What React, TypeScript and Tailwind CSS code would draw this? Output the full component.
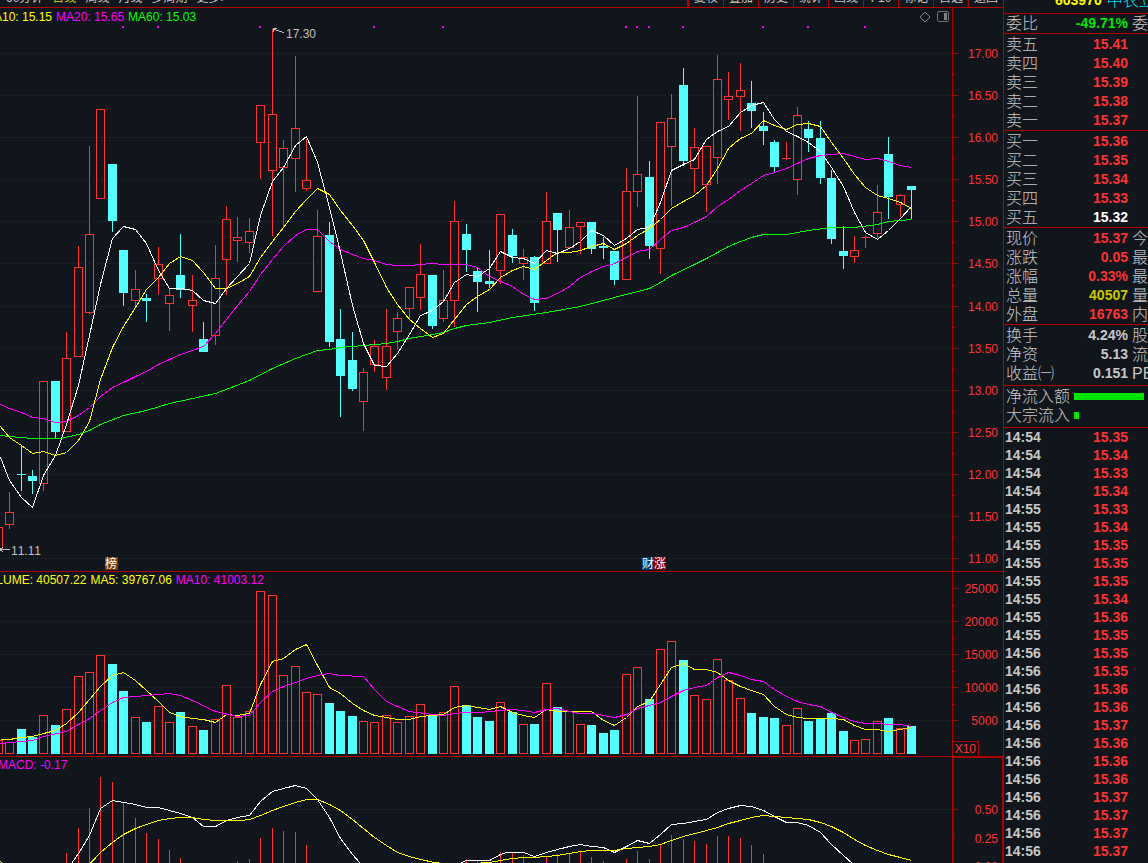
import { clsx } from 'clsx';

type Point = [number, number];
// x, rising, high, body top, body bottom, low, volume top
type Candle = [number, 0 | 1, number, number, number, number, number];

const RED = '#ff3232';
const CYAN = '#54ffff';
const LINE = '#b00000';
const GRID = '#8c1416';
const VOLUME_BASE = 754;

const candles: Candle[] = [
  [-2, 1, 527, 527, 549, 549, 740],
  [9, 1, 492, 512, 524, 528, 742],
  [21, 0, 445, 474, 474, 490, 729],
  [32, 0, 470, 476, 480, 493, 737],
  [43, 1, 381, 381, 483, 490, 715],
  [55, 0, 381, 381, 431, 437, 725],
  [66, 1, 332, 358, 431, 431, 709],
  [78, 1, 246, 267, 356, 356, 676],
  [89, 1, 146, 234, 312, 313, 672],
  [100, 1, 109, 109, 198, 198, 655],
  [112, 0, 164, 164, 220, 231, 664],
  [123, 0, 250, 250, 292, 305, 691],
  [135, 1, 270, 289, 300, 305, 717],
  [146, 0, 294, 298, 300, 321, 722],
  [158, 1, 247, 264, 278, 294, 706],
  [169, 1, 289, 295, 303, 330, 722],
  [180, 0, 234, 275, 289, 297, 712],
  [192, 1, 275, 300, 305, 331, 726],
  [203, 0, 322, 339, 351, 351, 730],
  [215, 1, 245, 278, 335, 344, 719],
  [226, 1, 206, 219, 259, 294, 685],
  [237, 1, 217, 237, 240, 261, 717],
  [249, 1, 218, 231, 242, 252, 711],
  [260, 1, 105, 105, 142, 178, 591],
  [272, 1, 29, 114, 170, 235, 595],
  [283, 1, 140, 148, 167, 227, 675],
  [295, 1, 56, 128, 158, 191, 666],
  [306, 1, 139, 180, 188, 190, 692],
  [317, 1, 210, 236, 291, 291, 694],
  [329, 0, 222, 235, 341, 346, 703],
  [340, 0, 309, 339, 375, 416, 711],
  [352, 0, 332, 360, 388, 390, 716],
  [363, 1, 368, 372, 401, 430, 721],
  [374, 1, 340, 346, 364, 371, 722],
  [386, 1, 309, 346, 377, 389, 715],
  [397, 1, 312, 318, 331, 348, 722],
  [409, 1, 287, 287, 308, 318, 716],
  [420, 1, 244, 274, 297, 309, 704],
  [432, 0, 275, 275, 325, 328, 715],
  [443, 1, 270, 300, 318, 321, 712],
  [454, 1, 201, 221, 300, 326, 686],
  [466, 0, 224, 234, 249, 271, 705],
  [477, 0, 267, 271, 281, 311, 717],
  [489, 0, 250, 281, 283, 287, 721],
  [500, 1, 214, 214, 270, 283, 702],
  [512, 0, 229, 235, 255, 262, 712],
  [523, 1, 249, 257, 263, 279, 724],
  [534, 0, 256, 257, 302, 310, 724],
  [546, 1, 192, 221, 263, 263, 683],
  [557, 0, 213, 213, 229, 261, 707],
  [569, 1, 210, 227, 247, 248, 711],
  [580, 1, 222, 222, 226, 253, 724],
  [591, 0, 222, 222, 248, 253, 725],
  [603, 0, 237, 246, 247, 258, 733],
  [614, 0, 251, 251, 279, 284, 730],
  [626, 1, 168, 191, 279, 279, 674],
  [637, 1, 96, 174, 191, 206, 667],
  [649, 0, 161, 177, 245, 258, 699],
  [660, 1, 122, 122, 248, 273, 649],
  [671, 1, 94, 118, 146, 205, 641],
  [683, 0, 68, 85, 160, 165, 660],
  [694, 1, 128, 147, 168, 192, 695],
  [706, 1, 146, 146, 184, 211, 699],
  [717, 1, 55, 79, 157, 183, 659],
  [728, 1, 72, 96, 99, 119, 680],
  [740, 1, 63, 90, 96, 130, 698],
  [751, 0, 81, 103, 110, 127, 713],
  [763, 0, 112, 126, 130, 144, 717],
  [774, 0, 140, 142, 166, 171, 718],
  [786, 1, 142, 158, 158, 159, 725],
  [797, 1, 107, 115, 179, 194, 708],
  [808, 0, 121, 129, 137, 151, 721],
  [820, 0, 121, 138, 177, 183, 719],
  [831, 0, 170, 178, 238, 243, 713],
  [843, 0, 226, 251, 255, 268, 731],
  [854, 1, 236, 250, 256, 262, 740],
  [865, 1, 235, 237, 237, 247, 739],
  [877, 1, 185, 212, 233, 237, 721],
  [888, 0, 137, 154, 196, 218, 718],
  [900, 1, 194, 195, 204, 216, 728],
  [911, 0, 186, 186, 189, 218, 726],
];

// one value per candle, starting with the candle at x = 9
const perCandle = (values: number[]): Point[] => values.map((y, i) => [candles[i + 1][0], y]);

const ma5: Point[] = [
  [0, 457],
  ...perCandle([
    480, 497, 507, 475, 455, 424, 385, 335, 284, 238, 226, 229, 243, 270, 288, 288, 290, 300, 303, 288,
    276, 263, 215, 181, 167, 145, 136, 162, 207, 252, 305, 343, 365, 366, 353, 334, 315, 310, 301, 282,
    274, 276, 268, 251, 257, 258, 263, 250, 253, 248, 241, 230, 235, 245, 238, 229, 227, 202, 170, 164,
    159, 139, 131, 126, 112, 105, 102, 119, 131, 136, 142, 151, 167, 186, 212, 232, 239, 230, 218, 206,
  ]),
];

const ma10: Point[] = [
  [0, 426],
  ...perCandle([
    437, 445, 453, 451, 455, 452, 440, 421, 379, 347, 326, 307, 289, 277, 263, 256, 260, 272, 288, 288,
    283, 276, 257, 241, 227, 211, 199, 188, 194, 210, 225, 240, 262, 287, 304, 319, 328, 337, 333, 319,
    304, 296, 289, 277, 270, 266, 269, 260, 252, 252, 250, 246, 243, 249, 243, 235, 228, 219, 208, 201,
    195, 185, 168, 148, 138, 133, 120, 125, 129, 124, 123, 126, 142, 158, 174, 187, 195, 198, 202, 208,
  ]),
];

const ma20: Point[] = [
  [0, 404],
  ...perCandle([
    408, 412, 417, 418, 422, 421, 415, 407, 396, 387, 382, 376, 371, 364, 359, 354, 350, 346, 333, 319,
    305, 291, 274, 259, 246, 235, 229, 229, 241, 249, 254, 258, 260, 264, 265, 265, 264, 263, 264, 264,
    264, 267, 276, 281, 286, 294, 299, 298, 293, 286, 277, 271, 266, 263, 257, 251, 249, 239, 230, 227,
    222, 216, 206, 199, 190, 183, 175, 172, 168, 163, 158, 155, 154, 153, 156, 159, 158, 161, 165, 167,
  ]),
];

const ma60: Point[] = [
  [0, 435], [9, 436], [32, 438], [60, 438], [78, 434], [89, 430], [100, 424], [123, 415], [146, 410],
  [169, 403], [192, 398], [215, 393], [249, 380], [272, 368], [295, 358], [317, 350], [329, 349],
  [340, 347], [363, 345], [386, 343], [397, 341], [409, 338], [432, 334], [443, 332], [454, 328],
  [466, 325], [489, 322], [512, 317], [546, 312], [580, 306], [614, 297], [649, 288], [660, 282],
  [671, 275], [694, 264], [706, 258], [717, 252], [728, 246], [740, 241], [751, 237], [763, 234],
  [786, 234], [808, 230], [831, 227], [854, 227], [877, 224], [888, 221], [911, 219],
];

const volumeMa5: Point[] = [
  [0, 739],
  ...perCandle([
    739, 737, 736, 733, 730, 723, 712, 699, 686, 675, 672, 680, 690, 701, 712, 716, 718, 719, 722, 714,
    715, 713, 684, 661, 658, 649, 644, 665, 687, 693, 703, 710, 715, 717, 719, 719, 716, 715, 714, 707,
    705, 707, 709, 706, 712, 715, 717, 709, 711, 711, 711, 711, 720, 725, 717, 706, 701, 684, 667, 663,
    669, 669, 672, 680, 686, 690, 694, 706, 714, 717, 718, 718, 718, 719, 725, 729, 729, 731, 729, 727,
  ]),
];

const volumeMa10: Point[] = [
  [0, 743], [32, 740], [43, 736], [66, 731], [78, 724], [89, 718], [100, 710], [112, 702], [123, 697],
  [135, 696], [158, 694], [169, 693], [180, 695], [192, 700], [215, 711], [237, 716], [249, 715],
  [260, 702], [272, 691], [283, 686], [295, 682], [306, 678], [317, 675], [329, 673], [340, 675],
  [363, 676], [374, 689], [386, 701], [397, 706], [409, 711], [432, 714], [443, 715], [454, 713],
  [466, 712], [480, 712], [500, 710], [512, 709], [523, 710], [534, 712], [546, 709], [557, 708],
  [569, 711], [580, 713], [591, 713], [603, 715], [614, 717], [626, 714], [637, 708], [649, 705],
  [660, 702], [671, 696], [683, 690], [694, 687], [706, 685], [717, 677], [728, 672], [740, 675],
  [751, 679], [763, 681], [774, 689], [786, 696], [797, 701], [808, 704], [820, 706], [831, 712],
  [843, 717], [854, 721], [865, 723], [877, 723], [888, 724], [900, 724], [911, 726],
];

const dif: Point[] = [
  [71, 863], [78, 853], [89, 835], [100, 808], [112, 800], [123, 802], [135, 804], [146, 807],
  [158, 807], [169, 810], [180, 813], [192, 817], [203, 826], [215, 826], [226, 820], [237, 817],
  [249, 815], [260, 801], [272, 791], [283, 788], [295, 785], [306, 788], [317, 799], [329, 817],
  [340, 838], [352, 854], [360, 863], [372, 876], [440, 876], [459, 863], [466, 860], [489, 860],
  [500, 854], [506, 852], [523, 852], [534, 856], [546, 852], [557, 849], [569, 846], [580, 844],
  [591, 846], [603, 847], [614, 852], [626, 846], [637, 840], [649, 843], [660, 834], [671, 824],
  [683, 823], [694, 821], [706, 819], [717, 812], [728, 808], [740, 805], [751, 806], [763, 810],
  [774, 816], [786, 822], [797, 822], [808, 825], [820, 832], [831, 844], [843, 855], [852, 863],
];

const dea: Point[] = [
  [0, 861], [6, 866], [86, 867], [100, 852], [112, 842], [123, 834], [135, 828], [146, 824],
  [158, 820], [169, 818], [180, 817], [192, 817], [203, 819], [215, 820], [240, 820], [249, 819],
  [260, 815], [272, 810], [283, 806], [295, 802], [306, 799], [317, 799], [329, 804], [340, 810],
  [352, 819], [363, 828], [374, 837], [386, 845], [397, 852], [409, 856], [420, 859], [434, 862],
  [450, 864], [473, 863], [489, 862], [500, 860], [512, 858], [523, 857], [534, 857], [557, 855],
  [569, 853], [580, 851], [591, 850], [614, 850], [626, 848], [637, 847], [649, 846], [660, 844],
  [671, 840], [683, 836], [706, 830], [717, 827], [728, 823], [740, 820], [751, 817], [763, 815],
  [774, 816], [786, 817], [808, 819], [820, 822], [831, 826], [843, 832], [854, 839], [865, 845],
  [877, 850], [888, 854], [900, 857], [911, 860],
];

const macdBars: Point[] = [
  [66, 853], [78, 828], [89, 808], [100, 777], [112, 782], [123, 802], [135, 818], [146, 833],
  [158, 839], [169, 850], [180, 858], [237, 861], [249, 859], [260, 838], [272, 828], [283, 831],
  [295, 832], [306, 845], [466, 859], [477, 860], [489, 862], [500, 852], [512, 853], [523, 855],
  [546, 857], [557, 854], [569, 853], [580, 851], [591, 857], [603, 861], [626, 859], [637, 851],
  [649, 859], [660, 844], [671, 835], [683, 839], [694, 841], [706, 844], [717, 836], [728, 836],
  [740, 838], [751, 845], [763, 854],
];

const eventDots = [122, 157, 259, 373, 442, 625, 636, 648, 682, 762, 807, 864];

const priceTicks: [string, number][] = [
  ['17.00', 53], ['16.50', 95], ['16.00', 137], ['15.50', 179], ['15.00', 221], ['14.50', 263],
  ['14.00', 306], ['13.50', 348], ['13.00', 390], ['12.50', 432], ['12.00', 474], ['11.50', 516],
  ['11.00', 558],
];
const volumeTicks: [string, number][] = [
  ['25000', 588], ['20000', 621], ['15000', 654], ['10000', 687], ['5000', 720],
];
const macdTicks: [string, number][] = [['0.50', 809], ['0.25', 838], ['0.00', 866]];
const minorTicks = [
  74, 116, 158, 200, 242, 285, 327, 369, 411, 453, 495, 537, 605, 638, 671, 704,
];

const periods = ['60分钟', '日线', '周线', '月线', '多周期', '更多>'];
const tools = ['复权', '叠加', '历史', '统计', '画线', 'F10', '标记', '自选', '返回'];

type Quote = { label: string; value: string; next?: string; color?: string };

const summary: Quote[] = [{ label: '委比', value: '-49.71%', next: '委', color: 'text-[#00e600]' }];
const asks: Quote[] = [
  { label: '卖五', value: '15.41' },
  { label: '卖四', value: '15.40' },
  { label: '卖三', value: '15.39' },
  { label: '卖二', value: '15.38' },
  { label: '卖一', value: '15.37' },
];
const bids: Quote[] = [
  { label: '买一', value: '15.36' },
  { label: '买二', value: '15.35' },
  { label: '买三', value: '15.34' },
  { label: '买四', value: '15.33' },
  { label: '买五', value: '15.32', color: 'text-white' },
];
const prices: Quote[] = [
  { label: '现价', value: '15.37', next: '今' },
  { label: '涨跌', value: '0.05', next: '最' },
  { label: '涨幅', value: '0.33%', next: '最' },
  { label: '总量', value: '40507', next: '量', color: 'text-[#c8c800]' },
  { label: '外盘', value: '16763', next: '内' },
];
const basics: Quote[] = [
  { label: '换手', value: '4.24%', next: '股', color: 'text-[#c8c8c8]' },
  { label: '净资', value: '5.13', next: '流', color: 'text-[#c8c8c8]' },
  { label: '收益㈠', value: '0.151', next: 'PE', color: 'text-[#c8c8c8]' },
];

const trades: [string, string][] = [
  ['14:54', '15.35'], ['14:54', '15.34'], ['14:54', '15.33'], ['14:54', '15.34'],
  ['14:55', '15.33'], ['14:55', '15.34'], ['14:55', '15.35'], ['14:55', '15.35'],
  ['14:55', '15.35'], ['14:55', '15.34'], ['14:55', '15.36'], ['14:55', '15.35'],
  ['14:56', '15.35'], ['14:56', '15.35'], ['14:56', '15.36'], ['14:56', '15.36'],
  ['14:56', '15.37'], ['14:56', '15.36'], ['14:56', '15.36'], ['14:56', '15.36'],
  ['14:56', '15.37'], ['14:56', '15.37'], ['14:56', '15.37'], ['14:56', '15.37'],
];

export default function App() {
  return (
    <div className="flex min-h-screen overflow-hidden bg-[#11151c] font-['Liberation_Sans','Noto_Sans_CJK_SC',sans-serif] text-[#c8c8c8] [font-kerning:none]">
      <main className="flex min-w-0 flex-1 flex-col">
        <Toolbar />
        <div className="flex">
          <div className="min-w-0 flex-1">
            <PriceChart />
            <VolumeChart />
            <MacdChart />
          </div>
          <Axis />
        </div>
      </main>
      <QuotePanel />
    </div>
  );
}

const Toolbar = () => (
  <nav className="flex h-2 items-end justify-between overflow-hidden border-b border-[#b00000] text-xs">
    <div className="flex gap-[9px] pl-1.5">
      {periods.map((p) => (
        <button key={p} className={clsx('pb-[3px] leading-3', p === '日线' && 'text-[#c8c800]')}>
          {p}
        </button>
      ))}
    </div>
    <div className="flex border-l border-[#b00000]">
      {tools.map((t) => (
        <button key={t} className="w-[35px] border-l border-[#b00000] pb-[3px] leading-3">
          {t}
        </button>
      ))}
    </div>
  </nav>
);

const PriceChart = () => (
  <section className="border-b border-[#b00000]">
    <div className="flex h-[17px] items-center justify-between pr-[3px] text-xs">
      <div className="-ml-4 flex gap-1">
        <span className="text-[#ffff00]">MA10: 15.15</span>
        <span className="text-[#ff00ff]">MA20: 15.65</span>
        <span className="text-[#00ff00]">MA60: 15.03</span>
      </div>
      <div className="flex items-center gap-[6px]">
        <button aria-label="标注">
          <svg className="block" width="12" height="12" viewBox="0 0 12 12" fill="none" stroke="#808080">
            <path d="M6 1 L11 6 L6 11 L1 6 Z" />
          </svg>
        </button>
        <button aria-label="侧栏">
          <svg className="block" width="12" height="12" viewBox="0 0 12 12">
            <rect x="0.5" y="0.5" width="11" height="10" rx="1.5" fill="none" stroke="#707070" />
            <rect x="7" y="2" width="3" height="7" fill="#808080" />
          </svg>
        </button>
      </div>
    </div>
    <svg className="block h-auto w-full" viewBox="0 25 952 546">
      <g shapeRendering="crispEdges">
        <GridLines rows={priceTicks.map(([, y]) => y)} />
        {eventDots.map((x) => (
          <rect key={x} x={x} y={26} width={2} height={2} fill="#ff00ff" />
        ))}
        {candles.map((c) => (
          <CandleShape key={c[0]} candle={c} />
        ))}
        <Curve points={ma60} color="#00ff00" />
        <Curve points={ma20} color="#ff00ff" />
        <Curve points={ma10} color="#ffff00" />
        <Curve points={ma5} color="#ffffff" />
        <g fill="none" stroke="#c0c0c0">
          <path d="M277 28.5 H273.5 V32 M274 29.5 L284 32.5" />
          <path d="M0 549.5 H10 M0 549.5 L3 547 M0 549.5 L3 552" />
        </g>
        <rect x={105} y={557} width={13} height={13} fill="#7a3c00" />
        <rect x={642} y={557} width={12} height={13} fill="#003a70" />
        <rect x={654} y={557} width={12} height={13} fill="#800000" />
      </g>
      <g fontSize={12} fill="#c0c0c0">
        <text x={286} y={38}>17.30</text>
        <text x={11} y={555}>11.11</text>
        <g fill="#ffffff">
          <text x={105} y={568}>榜</text>
          <text x={642} y={568}>财</text>
          <text x={654} y={568}>涨</text>
        </g>
      </g>
    </svg>
  </section>
);

const VolumeChart = () => (
  <section className="border-b border-[#b00000]">
    <div className="-ml-[21px] flex h-4 items-center gap-1 text-xs">
      <span className="text-[#ffff00]">VOLUME: 40507.22</span>
      <span className="text-[#ffff00]">MA5: 39767.06</span>
      <span className="text-[#ff00ff]">MA10: 41003.12</span>
    </div>
    <svg className="block h-auto w-full" viewBox="0 588 952 168" shapeRendering="crispEdges">
      <GridLines rows={[621, 654, 687, 720]} />
      {candles.map(([x, rising, , , , , top]) =>
        rising ? (
          <rect
            key={x}
            x={x - 3.5}
            y={top + 0.5}
            width={8}
            height={VOLUME_BASE - top - 1}
            fill="none"
            stroke={RED}
          />
        ) : (
          <rect key={x} x={x - 4} y={top} width={9} height={VOLUME_BASE - top} fill={CYAN} />
        )
      )}
      <Curve points={volumeMa5} color="#ffff00" />
      <Curve points={volumeMa10} color="#ff00ff" />
    </svg>
  </section>
);

const MacdChart = () => (
  <section>
    <div className="-ml-0.5 flex h-4 items-center text-xs text-[#ff00ff]">MACD: -0.17</div>
    <svg className="block h-auto w-full" viewBox="0 773 952 90" shapeRendering="crispEdges">
      <GridLines rows={[809]} />
      {macdBars.map(([x, top]) => (
        <rect key={x} x={x} y={top} width={1} height={863 - top} fill={RED} />
      ))}
      <Curve points={dif} color="#ffffff" />
      <Curve points={dea} color="#ffff00" />
    </svg>
  </section>
);

const GridLines = ({ rows }: { rows: number[] }) => (
  <g stroke={GRID} strokeDasharray="1 3">
    {rows.map((y) => (
      <line key={y} x1={1} x2={952} y1={y + 0.5} y2={y + 0.5} />
    ))}
  </g>
);

const Curve = ({ points, color }: { points: Point[]; color: string }) => (
  <polyline
    points={points.map(([x, y]) => `${x + 0.5},${y + 0.5}`).join(' ')}
    fill="none"
    stroke={color}
  />
);

const CandleShape = ({ candle }: { candle: Candle }) => {
  const [x, rising, high, top, bottom, low] = candle;
  const color = rising ? RED : CYAN;
  const hollow = rising && bottom > top;

  return (
    <g fill={color}>
      <rect x={x} y={high} width={1} height={top - high} />
      <rect x={x} y={bottom} width={1} height={low - bottom + 1} />
      {hollow ? (
        <rect x={x - 3.5} y={top + 0.5} width={8} height={bottom - top} fill="none" stroke={RED} />
      ) : (
        <rect x={x - 4} y={top} width={9} height={bottom - top + 1} />
      )}
    </g>
  );
};

const Axis = () => (
  <svg className="block w-[51px] shrink-0" width={51} height={855} viewBox="952 8 51 855">
    <g fill={LINE} shapeRendering="crispEdges">
      <rect x={952} y={8} width={1} height={749} />
      <rect x={952} y={571} width={51} height={1} />
      <rect x={952} y={756} width={51} height={2} />
      <rect x={952} y={757} width={2} height={106} />
      <rect x={1002} y={757} width={1} height={106} />
      <rect x={952} y={741} width={27} height={1} />
      <rect x={978} y={741} width={1} height={15} />
      {[...priceTicks, ...volumeTicks, macdTicks[0]].map(([, y]) => (
        <rect key={y} x={952} y={y} width={6} height={1} />
      ))}
      {[...minorTicks, 837].map((y) => (
        <rect key={y} x={952} y={y} width={3} height={1} />
      ))}
    </g>
    <g fill={RED} fontSize={12} textAnchor="end">
      {[...priceTicks, ...volumeTicks, ...macdTicks].map(([label, y]) => (
        <text key={label} x={998} y={y + 5}>
          {label}
        </text>
      ))}
      <text x={976} y={753}>X10</text>
    </g>
  </svg>
);

const QuotePanel = () => (
  <aside className="w-[145px] shrink-0 overflow-hidden border-l border-[#b00000]">
    <header className="flex h-3.5 items-end gap-[5px] border-b border-[#b00000] pb-[3px] pl-[51px] whitespace-nowrap">
      <span className="text-sm leading-[19px] font-bold text-[#ffff00]">603970</span>
      <span className="text-base leading-[19px] font-light text-[#00e1f0]">中农立</span>
    </header>
    <QuoteTable rows={summary} className="border-b" />
    <QuoteTable rows={asks} className="border-b pt-px" />
    <QuoteTable rows={bids} className="border-b pt-px" />
    <QuoteTable rows={prices} className="border-b pt-px" />
    <QuoteTable rows={basics} className="border-b pt-px pb-0.5" />
    <div className="border-b border-[#b00000] pt-px pb-0.5 pl-0.5 text-base leading-[19px] font-light">
      <div className="flex items-center gap-1">
        <span>净流入额</span>
        <span className="h-[7px] w-[70px] bg-[#00e600]" />
      </div>
      <div className="flex items-center gap-1">
        <span>大宗流入</span>
        <span className="h-[7px] w-[5px] bg-[#00e600]" />
      </div>
    </div>
    <table className="w-full table-fixed text-sm leading-[18px] font-bold">
      <tbody>
        {trades.map(([time, price], i) => (
          <tr key={i}>
            <td className="w-[66px] pl-px">{time}</td>
            <td className="w-[58px] text-right text-[#ff3232]">{price}</td>
            <td />
          </tr>
        ))}
      </tbody>
    </table>
  </aside>
);

const QuoteTable = ({ rows, className }: { rows: Quote[]; className: string }) => (
  <div className={clsx('border-[#b00000]', className)}>
    <table className="w-full table-fixed whitespace-nowrap">
      <tbody>
        {rows.map((row) => (
          <tr key={row.label} className="h-[19px] leading-[19px]">
            <th className="w-[66px] pl-0.5 text-left text-base leading-[19px] font-light">{row.label}</th>
            <td
              className={clsx(
                'w-[58px] text-right text-sm leading-[19px] font-bold',
                row.color ?? 'text-[#ff3232]'
              )}
            >
              {row.value}
            </td>
            <td className="pl-1 text-base leading-[19px] font-light">{row.next}</td>
          </tr>
        ))}
      </tbody>
    </table>
  </div>
);
